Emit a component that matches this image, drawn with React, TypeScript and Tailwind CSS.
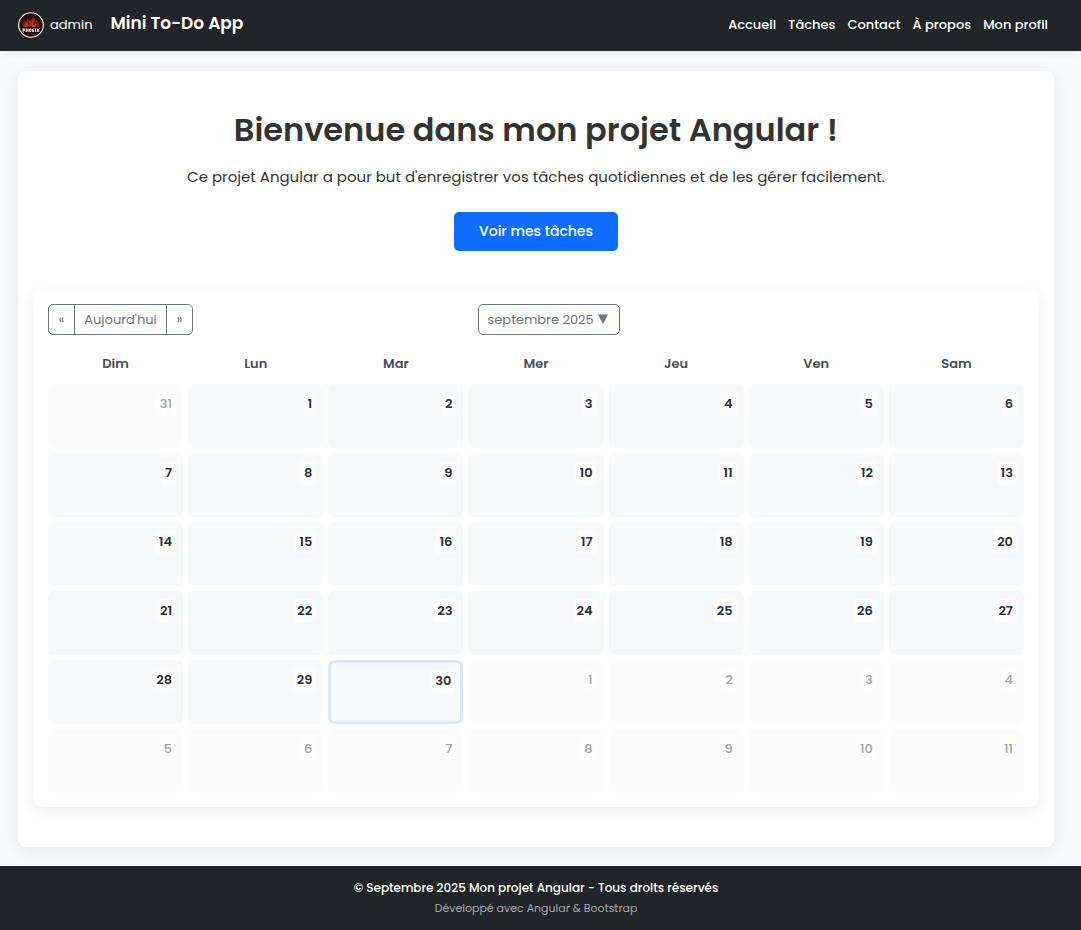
import React from "react";

const links = ["Accueil", "Tâches", "Contact", "À propos", "Mon profil"];
const weekdays = ["Dim", "Lun", "Mar", "Mer", "Jeu", "Ven", "Sam"];

type Day = { date: number; outside: boolean; today: boolean };

const days: Day[] = Array.from({ length: 42 }, (_, i) => {
  const date = i === 0 ? 31 : i <= 30 ? i : i - 30;
  return { date, outside: i === 0 || i > 30, today: i === 30 };
});

const weeks = Array.from({ length: 6 }, (_, w) => days.slice(w * 7, w * 7 + 7));

function Avatar() {
  return (
    <svg viewBox="0 0 26 26" className="h-[26px] w-[26px] shrink-0" aria-hidden="true">
      <circle cx="13" cy="13" r="12.300" fill="#240a08" stroke="#fff" strokeWidth="1.100" />
      <path
        d="M4.500 15c0-2 .5-3.500 2-4.500l-1-2 3 1 .5-3.500 3 2.500 1.500-1 1-2.500 2.500 2-.5 2 2.500-.5 1 2.500 1.500 1-.5 3z"
        fill="#7a1a10"
      />
      <path
        d="M6.500 12.500l2-3 2.500 2.500 0-3.500 2.500 2.500 1.500-4 2.500 2-1.500 1.500 2 .5 1.500 2-2 0 1 2h-4l-2-1.500-2 1.500h-4z"
        fill="#b83220"
      />
      <path d="M10 10l2.500 2-2 1.500zM15.500 10l2 2-2 1z" fill="#4a120b" />
      <path
        d="M5 16.500v3.500M5 17h1.800v1.300H5M8.300 16.500V20M10 16.500V20M8.300 18.300H10M11.500 17H13v2.500h-1.500zM16 17h-1.500v2.500H16M14.500 18.300H16M17.500 16.500V20M19 16.500l2 3.500M21 16.500L19 20"
        fill="none"
        stroke="#f0e4e1"
        strokeWidth="1"
      />
      <path d="M8.500 22h9" stroke="#8a2a1c" strokeWidth="0.900" strokeDasharray="1.500 0.700" />
    </svg>
  );
}

function Header() {
  return (
    <header className="relative bg-[#212529] pr-[33px] pl-[18px] text-white shadow-[0_2px_8px_rgba(0,0,0,0.08)]">
      <div className="flex h-[51px] items-center justify-between pb-[2px]">
        <div className="flex items-center">
          <a href="#profil" className="flex items-center gap-[6px] text-[13px]">
            <Avatar />
            admin
          </a>
          <a href="#accueil" className="ml-[18px] pb-[2px] text-[17px] font-semibold">
            Mini To-Do App
          </a>
        </div>
        <nav className="flex gap-[12px] text-[13px] font-medium">
          {links.map((l) => (
            <a key={l} href="#">
              {l}
            </a>
          ))}
        </nav>
      </div>
    </header>
  );
}

function Toolbar() {
  return (
    <div className="flex items-center justify-between px-[5px] text-[13px] text-[#6c757d]">
      <div className="flex h-[31px] divide-x divide-[#6c757d] overflow-hidden rounded-[5px] border border-[#6c757d]">
        <button type="button" aria-label="Mois précédent" className="w-[26px]">
          «
        </button>
        <button type="button" className="w-[92px]">
          Aujourd'hui
        </button>
        <button type="button" aria-label="Mois suivant" className="w-[25px]">
          »
        </button>
      </div>
      <div className="relative">
        <select
          aria-label="Mois"
          className="h-[31px] w-[142px] appearance-none rounded-[5px] border border-[#6c757d] bg-white pl-[9px]"
        >
          <option>septembre 2025</option>
        </select>
        <svg
          viewBox="0 0 10 10"
          className="pointer-events-none absolute top-[10px] right-[12px] h-[10px] w-[10px]"
          aria-hidden="true"
        >
          <path d="M0 0.500h10L5 10z" fill="#6c757d" />
        </svg>
      </div>
      <div className="w-[120px]" />
    </div>
  );
}

function DayCell({ day }: { day: Day }) {
  const tone = day.outside ? "bg-[#fcfcfd] text-[#a3a4a6]" : "bg-[#f8f9fb] text-[#2b2f36]";
  const frame = day.today ? "border-[3px] border-[#dbe8fb] p-[5px]" : "p-[7px]";
  return (
    <td className={`h-[64px] rounded-[6px] text-right align-top ${tone} ${frame}`}>
      <span
        className={`inline-block h-[24px] rounded-[4px] px-1 text-[13px] leading-[24px] ${
          day.outside ? "bg-[#fdfdfe] font-medium" : "bg-[#fcfcfd] font-semibold"
        }`}
      >
        {day.date}
      </span>
    </td>
  );
}

function Calendar() {
  return (
    <section className="mt-[39px] rounded-[8px] bg-white px-[9px] pt-[14px] pb-[9px] shadow-[0_4px_16px_rgba(0,0,0,0.08)]">
      <Toolbar />
      <table className="mt-[8px] w-full table-fixed border-separate border-spacing-[5px]">
        <thead>
          <tr>
            {weekdays.map((d) => (
              <th
                key={d}
                scope="col"
                className="h-[31px] text-center align-middle text-[13px] font-semibold text-[#495057]"
              >
                {d}
              </th>
            ))}
          </tr>
        </thead>
        <tbody>
          {weeks.map((week, i) => (
            <tr key={i}>
              {week.map((day, j) => (
                <DayCell key={j} day={day} />
              ))}
            </tr>
          ))}
        </tbody>
      </table>
    </section>
  );
}

export default function App() {
  return (
    <div className="flex min-h-screen flex-col bg-[#f8f9fc] font-['Poppins','Inter',sans-serif] text-[#333]">
      <Header />
      <main className="flex-1 pt-[20px] pr-[27px] pb-[19px] pl-[18px]">
        <div className="rounded-[8px] bg-white px-[16px] pt-[37px] pb-[40px] shadow-[0_4px_16px_rgba(0,0,0,0.08)]">
          <div className="text-center">
            <h1 className="text-[32px] leading-[44px] font-semibold">
              Bienvenue dans mon projet Angular !
            </h1>
            <p className="mt-[13px] text-[15px] leading-[24px]">
              Ce projet Angular a pour but d'enregistrer vos tâches quotidiennes et de les gérer
              facilement.
            </p>
            <button
              type="button"
              className="mt-[23px] h-[39px] w-[164px] rounded-[5px] bg-[#0d6efd] text-[14px] font-medium text-white"
            >
              Voir mes tâches
            </button>
          </div>
          <Calendar />
        </div>
      </main>
      <footer className="bg-[#212529] pt-[12px] pr-[9px] pb-[12px] text-center">
        <p className="text-[12px] leading-[20px] font-medium text-white">
          © Septembre 2025 Mon projet Angular - Tous droits réservés
        </p>
        <p className="text-[11px] leading-[20px] text-[#a3a8ae]">
          Développé avec Angular &amp; Bootstrap
        </p>
      </footer>
    </div>
  );
}
